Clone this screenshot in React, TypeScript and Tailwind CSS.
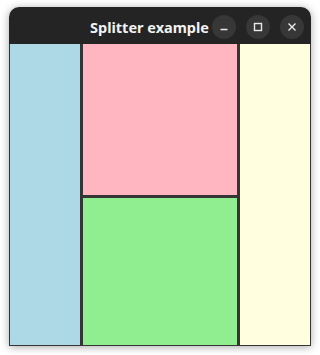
const splitter = "bg-[#353535]";

function WindowButton({ children }: { children: React.ReactNode }) {
  return (
    <div className="flex h-[24px] w-[24px] items-center justify-center rounded-full bg-[#373737] text-[#e8e8e8]">
      <svg width="16" height="16" viewBox="0 0 16 16" fill="none" stroke="currentColor" strokeWidth="1.4">
        {children}
      </svg>
    </div>
  );
}

export default function App() {
  return (
    <div className="h-[355px] w-[320px] overflow-hidden bg-white pl-[9px] pt-[7px]">
      <div className="flex h-[339px] w-[302px] flex-col overflow-hidden rounded-t-[10px] shadow-[0_1px_8px_rgba(0,0,0,0.35)]">
        <div className="flex h-[37px] shrink-0 items-center bg-[#242424] pt-[3px] pr-[7px]">
          <span
            className="ml-[81px] text-[14.5px] font-bold leading-none text-[#f2f2f2]"
            style={{ fontFamily: '"Noto Sans", "DejaVu Sans", sans-serif' }}
          >
            Splitter example
          </span>
          <div className="ml-auto flex items-center gap-[10px]">
            <WindowButton>
              <path d="M4.5 10.5h7" />
            </WindowButton>
            <WindowButton>
              <rect x="4.5" y="4.5" width="7" height="7" />
            </WindowButton>
            <WindowButton>
              <path d="M4.5 4.5l7 7M11.5 4.5l-7 7" />
            </WindowButton>
          </div>
        </div>
        <div className="flex h-[302px] border-x border-b border-[#353535]">
          <div className="w-[70px] bg-[#add8e6]" />
          <div className={`w-[3px] ${splitter}`} />
          <div className="flex w-[154px] flex-col">
            <div className="h-[151px] bg-[#ffb6c1]" />
            <div className={`h-[3px] ${splitter}`} />
            <div className="flex-1 bg-[#90ee90]" />
          </div>
          <div className={`w-[3px] ${splitter}`} />
          <div className="w-[70px] bg-[#ffffe0]" />
        </div>
      </div>
    </div>
  );
}
